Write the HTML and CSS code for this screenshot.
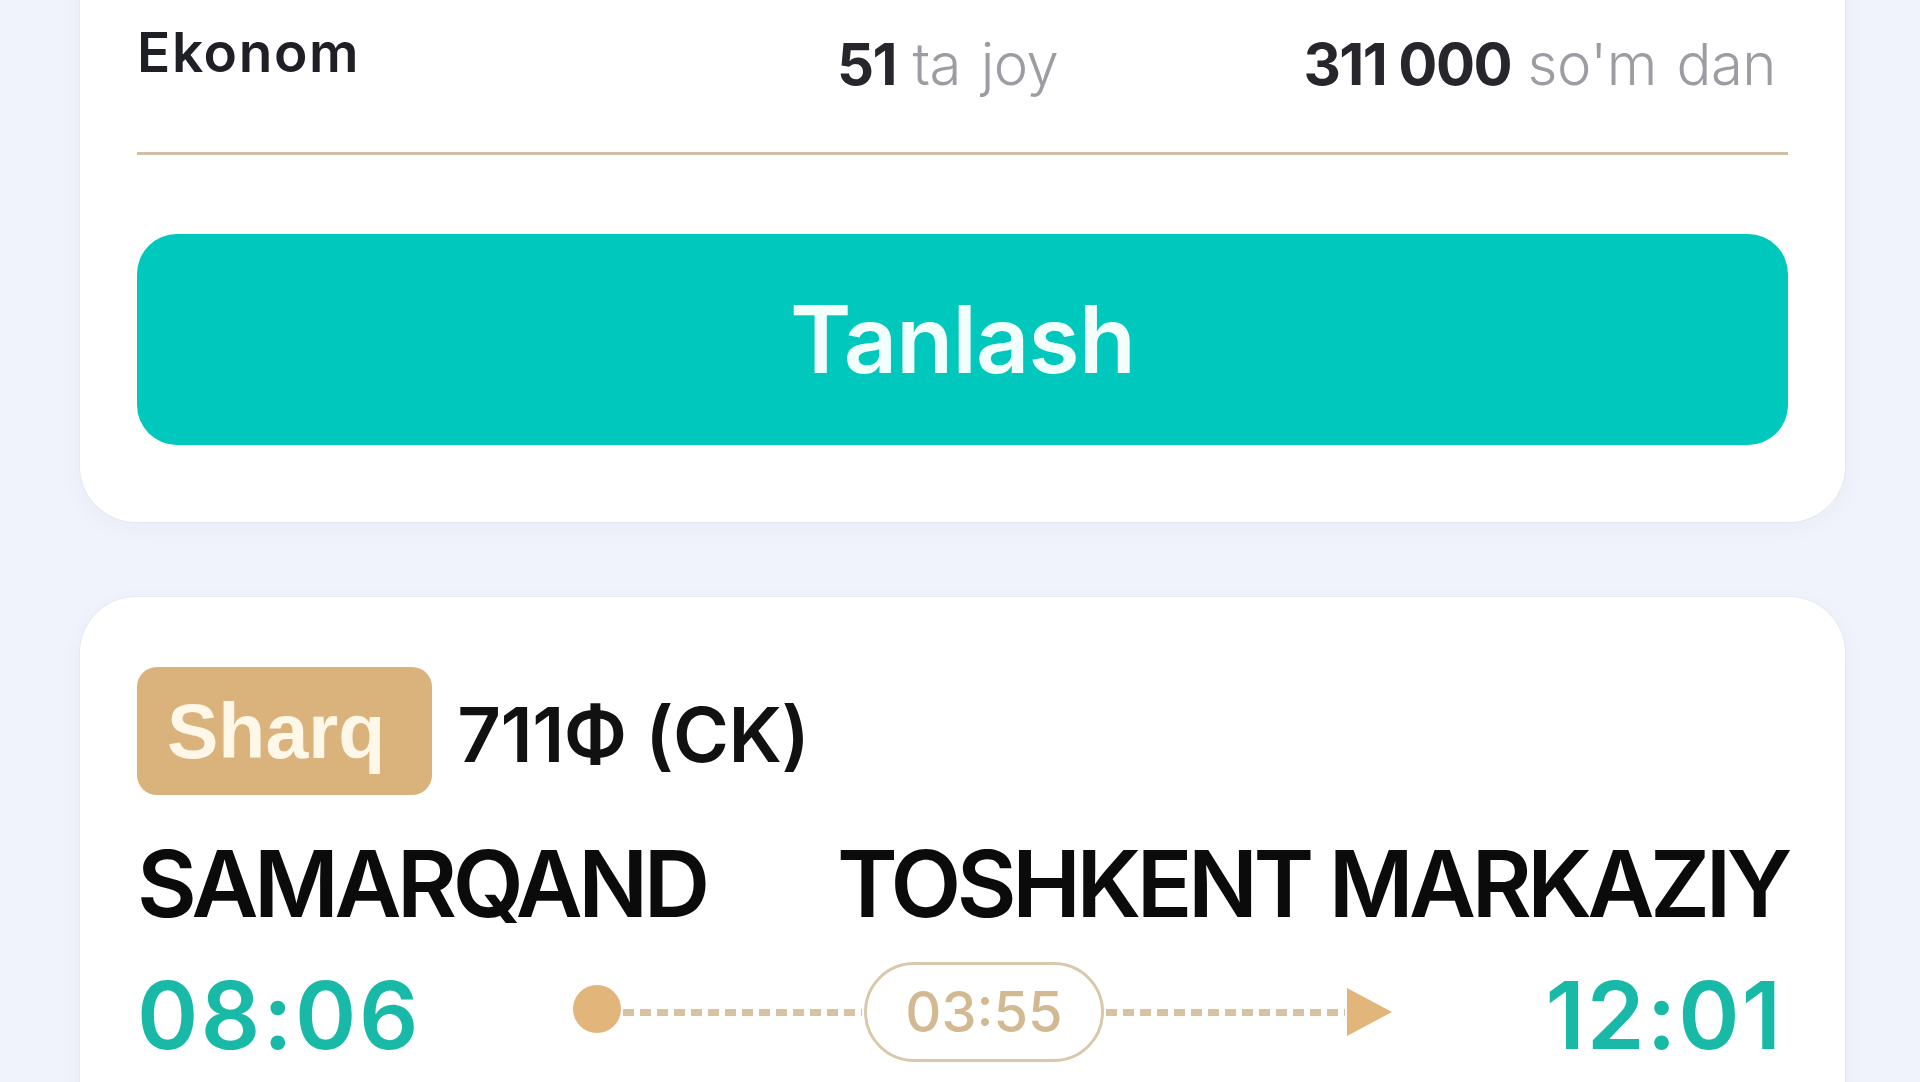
FILE: index.html
```html
<!DOCTYPE html>
<html lang="uz">
<head>
<meta charset="utf-8">
<title>Poyezdlar</title>
<link rel="stylesheet" href="styles.css">
</head>
<body>
<div class="page">
  <section class="card card-top">
    <div class="class-row">
      <div class="class-name">Ekonom</div>
      <div class="seats"><b>51</b> <span class="muted">ta joy</span></div>
      <div class="price"><b>311<span class="thin"></span>000</b> <span class="muted">so'm dan</span></div>
    </div>
    <div class="divider"></div>
    <button class="select-btn" type="button">Tanlash</button>
  </section>

  <section class="card card-train">
    <div class="train-head">
      <span class="badge">Sharq</span>
      <span class="train-no">711Ф (CK)</span>
    </div>
    <div class="stations">
      <span class="station">SAMARQAND</span>
      <span class="station">TOSHKENT MARKAZIY</span>
    </div>
    <div class="times">
      <span class="time time-dep">08:06</span>
      <div class="route">
        <span class="dot"></span>
        <span class="dash"></span>
        <span class="duration">03:55</span>
        <span class="dash"></span>
        <svg class="arrow" width="45" height="48" viewBox="0 0 45 48"><path d="M0 0 L45 24 L0 48 Z" fill="#e2b57b"/></svg>
      </div>
      <span class="time time-arr">12:01</span>
    </div>
  </section>
</div>
</body>
</html>
```

FILE: styles.css
```css
html, body {
  margin: 0;
  padding: 0;
}

body {
  width: 1920px;
  height: 1082px;
  overflow: hidden;
  background: #f0f3fb;
  font-family: Inter, "Noto Sans", sans-serif;
  color: #111;
}

.page {
  padding: 0 75px 0 80px;
}

.card {
  background: #fff;
  border-radius: 56px;
  box-shadow: 0 0 0 1px rgba(40, 50, 90, 0.035), 0 6px 24px rgba(40, 50, 90, 0.035);
  padding: 0 57px;
}

.card-top {
  margin-top: -100px;
  padding-top: 125px;
  padding-bottom: 77px;
}

.class-row {
  display: grid;
  grid-template-columns: 700px 1fr auto;
  align-items: start;
  height: 68px;
}

.class-name {
  font-size: 55px;
  line-height: 1;
  font-weight: 600;
  color: #1f1f26;
  letter-spacing: 1.6px;
}

.seats,
.price {
  font-size: 58px;
  line-height: 1;
  margin-top: 10px;
  white-space: nowrap;
}

.seats b,
.price b {
  font-weight: 700;
  color: #26262c;
  letter-spacing: -1.5px;
}

.thin {
  display: inline-block;
  width: 12px;
}

.muted {
  font-weight: 300;
  color: #9c9ca2;
  letter-spacing: -0.5px;
  word-spacing: 4px;
}

.price {
  text-align: right;
  padding-right: 12px;
}

.divider {
  margin-top: 59px;
  height: 3px;
  background: #cfbfa5;
}

.select-btn {
  display: flex;
  align-items: center;
  justify-content: center;
  width: 100%;
  height: 211px;
  margin-top: 79px;
  border: none;
  border-radius: 40px;
  background: #00c8bc;
  color: #f3fffd;
  font-family: Inter, "Noto Sans", sans-serif;
  font-size: 93px;
  line-height: 1;
  font-weight: 600;
  letter-spacing: -0.8px;
  padding: 0;
}

.card-train {
  margin-top: 75px;
  padding-top: 70px;
  padding-bottom: 80px;
}

.train-head {
  display: flex;
  align-items: center;
  gap: 25px;
  height: 128px;
}

.badge {
  display: flex;
  align-items: center;
  height: 128px;
  padding: 0 47px 0 30px;
  border-radius: 20px;
  background: #d9b27c;
  color: #fff7e8;
  font-family: "Liberation Sans", Arial, sans-serif;
  font-weight: 700;
  font-size: 77px;
  line-height: 1;
  box-sizing: border-box;
}

.train-no {
  font-size: 76px;
  line-height: 1;
  font-weight: 600;
  color: #111;
  margin-top: 6px;
  letter-spacing: -0.5px;
}

.stations {
  display: flex;
  justify-content: space-between;
  margin-top: 43px;
}

.station {
  font-size: 92px;
  line-height: 1;
  font-weight: 600;
  color: #0b0b0b;
  letter-spacing: -4.4px;
}

.times {
  display: flex;
  align-items: flex-start;
  margin-top: 32px;
}

.time {
  font-size: 93px;
  line-height: 1;
  font-weight: 600;
  color: #19b9a8;
  margin-top: 7px;
}

.time-dep {
  width: 436px;
  letter-spacing: 2.5px;
}

.time-arr {
  margin-left: auto;
  margin-right: 5px;
  letter-spacing: 2px;
}

.route {
  display: flex;
  align-items: center;
  width: 819px;
  height: 100px;
}

.dot {
  flex: none;
  width: 48px;
  height: 48px;
  border-radius: 50%;
  background: #e2b57b;
  margin-top: -6px;
}

.dash {
  flex: 1;
  height: 7px;
  background: repeating-linear-gradient(90deg, #d9c2a0 0 11px, transparent 11px 17px);
  margin: 0 2px;
}

.duration {
  flex: none;
  box-sizing: border-box;
  width: 240px;
  height: 100px;
  border: 3px solid #dac8ab;
  border-radius: 50px;
  display: flex;
  align-items: center;
  justify-content: center;
  font-size: 56px;
  line-height: 1;
  font-weight: 500;
  color: #d2b992;
}

.arrow {
  flex: none;
  display: block;
}
```
